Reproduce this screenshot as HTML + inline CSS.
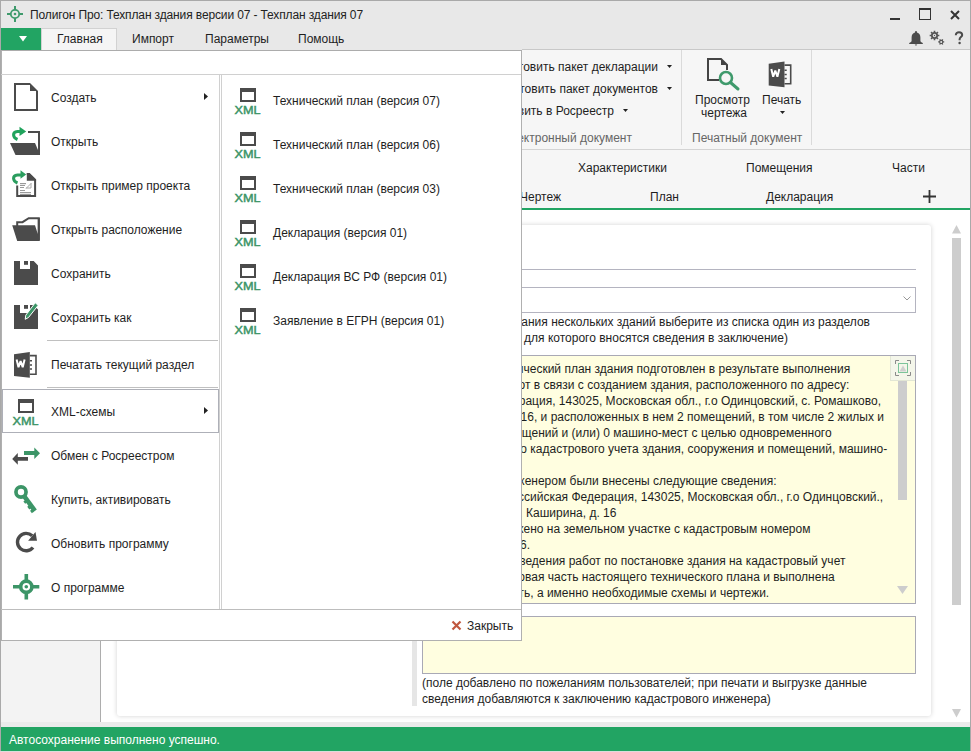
<!DOCTYPE html>
<html><head><meta charset="utf-8">
<style>
*{margin:0;padding:0;box-sizing:border-box}
html,body{width:971px;height:752px;overflow:hidden;background:#fff}
body{position:relative;font-family:"Liberation Sans",sans-serif;font-size:12px;color:#1e1e1e}
.a{position:absolute}
.t{position:absolute;white-space:nowrap;line-height:14px;font-size:12px}
svg{position:absolute;overflow:visible}
</style></head><body>

<!-- window chrome -->
<div class="a" style="left:0;top:0;width:971px;height:50px;background:#e8e8e8"></div>
<div class="a" style="left:0;top:0;width:971px;height:1px;background:#a9a9a9"></div>
<div class="a" style="left:0;top:0;width:1px;height:752px;background:#a9a9a9"></div>
<div class="a" style="left:970px;top:0;width:1px;height:752px;background:#a9a9a9"></div>
<!-- title icon -->
<svg style="left:7px;top:6px" width="16" height="16" viewBox="0 0 16 16">
 <g fill="#3f9a6c"><rect x="7" y="0" width="2" height="4"/><rect x="7" y="12" width="2" height="4"/><rect x="0" y="7" width="4" height="2"/><rect x="12" y="7" width="4" height="2"/></g>
 <circle cx="8" cy="8" r="4.2" fill="none" stroke="#3f9a6c" stroke-width="1.8"/><circle cx="8" cy="8" r="1.3" fill="#3f9a6c"/>
</svg>
<div class="t" style="left:30px;top:8px;color:#222;letter-spacing:-0.13px">Полигон Про: Техплан здания версии 07 - Техплан здания 07</div>
<!-- window buttons -->
<div class="a" style="left:890px;top:18px;width:10px;height:2px;background:#333"></div>
<div class="a" style="left:919px;top:8px;width:12px;height:12px;border:1.5px solid #333;border-top-width:2px"></div>
<svg style="left:950px;top:10px" width="10" height="10" viewBox="0 0 10 10"><path d="M1 1L9 9M9 1L1 9" stroke="#333" stroke-width="2"/></svg>
<!-- bell gear help -->
<svg style="left:908px;top:30px" width="16" height="16" viewBox="0 0 16 16"><path d="M8 1a1 1 0 0 1 1 1v.4c2.3.6 3.4 2.6 3.4 5.1v3.2c0 .9 1 1.6 2.4 2.3V14H1.2v-1c1.4-.7 2.4-1.4 2.4-2.3V7.5C3.6 5 4.7 3 7 2.4V2a1 1 0 0 1 1-1z" fill="#4b4b4b"/><path d="M6.8 14.6h2.4a1.2 1 0 0 1-2.4 0z" fill="#4b4b4b"/></svg>
<svg style="left:0;top:0" width="971" height="60" viewBox="0 0 971 60"><polygon points="939.32,34.64 939.32,36.36 938.02,36.27 937.53,37.44 938.52,38.30 937.30,39.52 936.44,38.53 935.27,39.02 935.36,40.32 933.64,40.32 933.73,39.02 932.56,38.53 931.70,39.52 930.48,38.30 931.47,37.44 930.98,36.27 929.68,36.36 929.68,34.64 930.98,34.73 931.47,33.56 930.48,32.70 931.70,31.48 932.56,32.47 933.73,31.98 933.64,30.68 935.36,30.68 935.27,31.98 936.44,32.47 937.30,31.48 938.52,32.70 937.53,33.56 938.02,34.73" fill="#555"/><circle cx="934.5" cy="35.5" r="1.7" fill="#e8e8e8"/><polygon points="944.21,41.18 944.21,42.62 943.31,42.52 942.80,43.41 943.33,44.15 942.08,44.87 941.71,44.04 940.69,44.04 940.32,44.87 939.07,44.15 939.60,43.41 939.09,42.52 938.19,42.62 938.19,41.18 939.09,41.28 939.60,40.39 939.07,39.65 940.32,38.93 940.69,39.76 941.71,39.76 942.08,38.93 943.33,39.65 942.80,40.39 943.31,41.28" fill="#555"/><circle cx="941.2" cy="41.9" r="1.0" fill="#e8e8e8"/><circle cx="934.5" cy="35.5" r="0.7" fill="#555"/></svg>
<svg style="left:954px;top:31px" width="10" height="14" viewBox="0 0 10 14"><path d="M1.8 4.2C1.8 2.3 3.2 1.2 5 1.2S8.2 2.3 8.2 4C8.2 5.9 5.6 6.3 5.6 8.2V9.3" fill="none" stroke="#4b4b4b" stroke-width="2"/><circle cx="5.6" cy="12" r="1.2" fill="#4b4b4b"/></svg>

<!-- tab row -->
<div class="a" style="left:1px;top:28px;width:40px;height:22px;background:#22a463"></div>
<svg style="left:19px;top:35.5px" width="8" height="6" viewBox="0 0 8 6"><path d="M0 0H8L4 5.6z" fill="#fff"/></svg>
<div class="a" style="left:41px;top:28px;width:76px;height:22px;background:#f5f5f5;border:1px solid #d2d2d2;border-bottom:none"></div>
<div class="t" style="left:57px;top:32px">Главная</div>
<div class="t" style="left:132px;top:32px">Импорт</div>
<div class="t" style="left:205px;top:32px">Параметры</div>
<div class="t" style="left:298px;top:32px">Помощь</div>
<div class="a" style="left:522px;top:49px;width:448px;height:1px;background:#c8c8c8"></div><div class="a" style="left:1px;top:50px;width:521px;height:1px;background:#acacac"></div>

<!-- ribbon -->
<div class="a" style="left:522px;top:50px;width:448px;height:100px;background:#f6f6f6"></div>
<div class="a" style="left:1px;top:149px;width:969px;height:1px;background:#d4d4d4"></div>
<div class="t" style="right:313px;top:60px">Подготовить пакет декларации</div>
<div class="t" style="right:313px;top:82px">Подготовить пакет документов</div>
<div class="t" style="right:357px;top:104px">Отправить в Росреестр</div>
<div class="t" style="right:339px;top:131px;color:#666">Электронный документ</div>
<svg style="left:667px;top:65px" width="5" height="3" viewBox="0 0 5 3"><path d="M0 0H5L2.5 3z" fill="#222"/></svg>
<svg style="left:667px;top:87px" width="5" height="3" viewBox="0 0 5 3"><path d="M0 0H5L2.5 3z" fill="#222"/></svg>
<svg style="left:623px;top:109px" width="5" height="3" viewBox="0 0 5 3"><path d="M0 0H5L2.5 3z" fill="#222"/></svg>
<div class="a" style="left:681px;top:50px;width:1px;height:95px;background:#dadada"></div>
<div class="a" style="left:811px;top:50px;width:1px;height:95px;background:#dadada"></div>
<!-- search doc icon -->
<svg style="left:707px;top:58px" width="33" height="32" viewBox="0 0 33 32">
 <path d="M12 22H1V1h13l6 6v5" fill="none" stroke="#444" stroke-width="2"/><path d="M14 1v6h6" fill="#444"/>
 <circle cx="19" cy="20" r="6" fill="none" stroke="#3f9a6c" stroke-width="2.6"/><path d="M23.5 24.5L31 31" stroke="#3f9a6c" stroke-width="3" stroke-linecap="round"/>
</svg>
<div class="t" style="left:695px;top:93px">Просмотр</div>
<div class="t" style="left:701px;top:106px">чертежа</div>
<!-- word icon -->
<svg style="left:0;top:0" width="971" height="160" viewBox="0 0 971 160"><g transform="translate(754.7,-290.5)">
<path d="M14 354.2L29.8 352V377.8L14 375.9Z" fill="#4b4b4b"/>
<path d="M29.8 355.6H36V374.2H29.8" fill="none" stroke="#4b4b4b" stroke-width="1.6"/>
<path d="M29.8 360h2.2v1.6h-2.2zM29.8 364.2h2.2v1.6h-2.2zM29.8 368.2h2.2v1.6h-2.2z" fill="#4b4b4b"/>
<path d="M16.6 359.4L18.5 367.2L20.6 361.2L22.7 367.2L24.6 359.4" fill="none" stroke="#fff" stroke-width="2" stroke-linejoin="bevel"/>
</g></svg>
<div class="t" style="left:762px;top:93px">Печать</div>
<svg style="left:780px;top:111px" width="5" height="3" viewBox="0 0 5 3"><path d="M0 0H5L2.5 3z" fill="#222"/></svg>
<div class="t" style="left:692px;top:131px;color:#666">Печатный документ</div>

<!-- tabs area -->
<div class="a" style="left:1px;top:150px;width:969px;height:59px;background:#f6f6f6"></div>
<div class="t" style="left:578px;top:161px">Характеристики</div>
<div class="t" style="left:746px;top:161px">Помещения</div>
<div class="t" style="left:892px;top:161px">Части</div>
<div class="t" style="right:410px;top:190px">Чертеж</div>
<div class="t" style="left:650px;top:190px">План</div>
<div class="t" style="left:766px;top:190px">Декларация</div>
<svg style="left:923px;top:190px" width="13" height="13" viewBox="0 0 13 13"><path d="M6.5 0V13M0 6.5H13" stroke="#333" stroke-width="1.8"/></svg>
<div class="a" style="left:101px;top:208px;width:869px;height:2px;background:#22a463"></div>

<!-- left panel -->
<div class="a" style="left:1px;top:150px;width:100px;height:572px;background:#f3f3f3;border-right:1px solid #adadad"></div>
<!-- bottom band -->
<div class="a" style="left:1px;top:722px;width:969px;height:5px;background:#ebebeb"></div>

<!-- card -->
<div class="a" style="left:117px;top:225px;width:814px;height:491px;background:#fff;border-radius:3px;box-shadow:0 0 5px rgba(0,0,0,.18)"></div>
<div class="a" style="left:430px;top:269px;width:486px;height:1px;background:#b4b4c0"></div>
<div class="a" style="left:430px;top:287px;width:486px;height:26px;border:1px solid #b4b4c0;background:#fff"></div>
<svg style="left:903px;top:296px" width="8" height="5" viewBox="0 0 8 5"><path d="M.5 .5L4 4L7.5 .5" fill="none" stroke="#999" stroke-width="1"/></svg>
<div class="t" style="right:101px;top:315px">(в случае создания нескольких зданий выберите из списка один из разделов</div>
<div class="t" style="right:183px;top:331px">«Характеристики здания», для которого вносятся сведения в заключение)</div>

<!-- yellow box 1 -->
<div class="a" style="left:422px;top:355px;width:494px;height:249px;background:#fffee0;border:1px solid #a9a9b5"></div>

<div class="a" style="left:423px;top:356px;width:492px;height:247px;overflow:hidden">
<div class="t" style="right:64.8px;top:6px">Технический план здания подготовлен в результате выполнения</div>
<div class="t" style="right:65.7px;top:22px">кадастровых работ в связи с созданием здания, расположенного по адресу:</div>
<div class="t" style="right:34.0px;top:38px">Российская Федерация, 143025, Московская обл., г.о Одинцовский, с. Ромашково,</div>
<div class="t" style="right:31.0px;top:54px">ул. Каширина, д. 16, и расположенных в нем 2 помещений, в том числе 2 жилых и</div>
<div class="t" style="right:83.4px;top:70px">0 нежилых помещений и (или) 0 машино-мест с целью одновременного</div>
<div class="t" style="right:27.8px;top:86px">государственного кадастрового учета здания, сооружения и помещений, машино-</div>
<div class="t" style="right:138.5px;top:118px">Кадастровым инженером были внесены следующие сведения:</div>
<div class="t" style="right:31.8px;top:134px">Адрес: Российская Федерация, 143025, Московская обл., г.о Одинцовский.,</div>
<div class="t" style="right:298.6px;top:150px">с. Ромашково, ул. Каширина, д. 16</div>
<div class="t" style="right:104.6px;top:166px">Здание расположено на земельном участке с кадастровым номером</div>
<div class="t" style="right:385.0px;top:182px">50:20:0000000:16.</div>
<div class="t" style="right:69.6px;top:198px">В ходе проведения работ по постановке здания на кадастровый учет</div>
<div class="t" style="right:80.3px;top:214px">была подготовлена текстовая часть настоящего технического плана и выполнена</div>
<div class="t" style="right:145.8px;top:230px">графическая часть, а именно необходимые схемы и чертежи.</div>
</div>
<div class="a" style="left:890px;top:356px;width:25px;height:25px;background:#f4f6ea;border-left:1px solid #e2e6d4;border-bottom:1px solid #e2e6d4"></div>
<svg style="left:895px;top:360px" width="16" height="16" viewBox="0 0 16 16"><path d="M.5 4V.5H4M12 .5h3.5V4M15.5 12v3.5H12M4 15.5H.5V12" fill="none" stroke="#8a8a8a" stroke-width="1"/><rect x="3.5" y="3.5" width="9" height="9" fill="none" stroke="#7cc49a" stroke-width="1"/><path d="M4.5 11.5L8 5.5L11.5 11.5z" fill="#cfcfcf"/></svg>
<div class="a" style="left:898px;top:381px;width:9px;height:119px;background:#cdcdcd"></div>
<svg style="left:897px;top:586px" width="11" height="8" viewBox="0 0 11 8"><path d="M0 0H11L5.5 8z" fill="#cdcdcd"/></svg>
<!-- yellow box 2 -->
<div class="a" style="left:422px;top:616px;width:494px;height:58px;background:#fffee0;border:1px solid #a9a9b5"></div>
<div class="t" style="left:422px;top:676px">(поле добавлено по пожеланиям пользователей; при печати и выгрузке данные</div>
<div class="t" style="left:422px;top:692px">сведения добавляются к заключению кадастрового инженера)</div>
<div class="a" style="left:412px;top:226px;width:5px;height:480px;background:#e6e6e6"></div>

<!-- outer scrollbar -->
<svg style="left:952px;top:225px" width="9" height="8.5" viewBox="0 0 9 8.5"><path d="M0 8.5H9L4.5 0z" fill="#cdcdcd"/></svg>
<div class="a" style="left:952px;top:238px;width:9px;height:367px;background:#cdcdcd"></div>
<svg style="left:952px;top:709px" width="9" height="8.5" viewBox="0 0 9 8.5"><path d="M0 0H9L4.5 8.5z" fill="#cdcdcd"/></svg>

<!-- status bar -->
<div class="a" style="left:1px;top:727px;width:969px;height:24px;background:#22a463"></div>
<div class="a" style="left:0;top:751px;width:971px;height:1px;background:#dcdcdc"></div>
<div class="t" style="left:9px;top:733px;color:#fff">Автосохранение выполнено успешно.</div>

<!-- MENU OVERLAY -->
<div class="a" style="left:1px;top:51px;width:521px;height:590px;background:#fff;border:1px solid #b0b0b0;border-top:none"></div>
<div class="a" style="left:1px;top:74px;width:520px;height:1px;background:#d0d0d0"></div>
<div class="a" style="left:219px;top:75px;width:1px;height:534px;background:#d0d0d0"></div>
<div class="a" style="left:221px;top:75px;width:1px;height:534px;background:#d0d0d0"></div>
<div class="a" style="left:1px;top:609px;width:520px;height:1px;background:#bdbdbd"></div>

<!-- menu items -->
<div class="t" style="left:51px;top:91px">Создать</div>
<svg style="left:204px;top:93px" width="4" height="7" viewBox="0 0 4 7"><path d="M0 0L4 3.5L0 7z" fill="#222"/></svg>
<div class="t" style="left:51px;top:135px">Открыть</div>
<div class="t" style="left:51px;top:179px">Открыть пример проекта</div>
<div class="t" style="left:51px;top:223px">Открыть расположение</div>
<div class="t" style="left:51px;top:267px">Сохранить</div>
<div class="t" style="left:51px;top:311px">Сохранить как</div>
<div class="a" style="left:47px;top:340px;width:171px;height:1px;background:#c0c0c0"></div>
<div class="t" style="left:51px;top:358px">Печатать текущий раздел</div>
<div class="a" style="left:47px;top:387px;width:171px;height:1px;background:#c0c0c0"></div>
<div class="a" style="left:2px;top:389px;width:217px;height:44px;border:1px solid #aeb0b8;background:#fff"></div>
<div class="t" style="left:51px;top:405px">XML-схемы</div>
<svg style="left:204px;top:407px" width="4" height="7" viewBox="0 0 4 7"><path d="M0 0L4 3.5L0 7z" fill="#222"/></svg>
<div class="t" style="left:51px;top:449px">Обмен с Росреестром</div>
<div class="t" style="left:51px;top:493px">Купить, активировать</div>
<div class="t" style="left:51px;top:537px">Обновить программу</div>
<div class="t" style="left:51px;top:581px">О программе</div>

<div class="t" style="left:273px;top:94px">Технический план (версия 07)</div>
<div class="t" style="left:273px;top:138px">Технический план (версия 06)</div>
<div class="t" style="left:273px;top:182px">Технический план (версия 03)</div>
<div class="t" style="left:273px;top:226px">Декларация (версия 01)</div>
<div class="t" style="left:273px;top:270px">Декларация ВС РФ (версия 01)</div>
<div class="t" style="left:273px;top:314px">Заявление в ЕГРН (версия 01)</div>

<svg style="left:451px;top:620px" width="11" height="11" viewBox="0 0 11 11"><path d="M1.5 1.5L9.5 9.5M9.5 1.5L1.5 9.5" stroke="#c0573e" stroke-width="2.2"/></svg>
<div class="t" style="left:467px;top:619px">Закрыть</div>
<svg style="left:0;top:0;pointer-events:none" width="971" height="752" viewBox="0 0 971 752">
<!-- create -->
<path d="M14 83H30L38 91V111H14Z M16 85V109H36V91H30V85Z" fill="#4b4b4b" fill-rule="evenodd"/>
<!-- open -->
<path d="M28 131H40V155H38V133H28Z" fill="#4b4b4b"/>
<path d="M10 143H35L38 150V155H15.5Z" fill="#4b4b4b"/>
<path d="M17.5 139.5C12.5 137.5 12 132 17.5 131.5H21.5" fill="none" stroke="#20a35c" stroke-width="3"/>
<path d="M19.5 126.8L26.2 131.4L19.5 136Z" fill="#20a35c"/>
<!-- open sample -->
<path d="M16.2 185.5V197H36.1V179.5L29.5 173H26.8V175H28.7L34.1 180.3V195H18.2V185.5Z" fill="#4b4b4b"/>
<path d="M26.8 173H29.5L36.1 179.5V180.7H26.8Z" fill="#4b4b4b"/>
<g fill="#9a9a9a"><rect x="20" y="183" width="6" height="1.2"/><rect x="20" y="185" width="5" height="1"/><rect x="20" y="187" width="4" height="1"/><rect x="20" y="190" width="5" height="1"/><rect x="20" y="192" width="11" height="1.2"/><rect x="20" y="194" width="11" height="1"/></g>
<path d="M26 188.5L31 183.5M26 188h5v-5" fill="none" stroke="#aaa" stroke-width="1"/>
<path d="M17.5 183C12.5 181 12 175.5 17.5 175H21" fill="none" stroke="#2a9d5e" stroke-width="3"/>
<path d="M20.5 170.2L26.2 174.5L20.5 178.8Z" fill="#2a9d5e"/>
<!-- folder location -->
<path d="M17.2 227V222.2H22.5L28.7 218.2H38.8V240" fill="none" stroke="#4b4b4b" stroke-width="2"/>
<path d="M12.2 225.2H35L37.8 234V218H39.8V241H17.2Z" fill="#4b4b4b"/>
<!-- save -->
<path d="M14 261H20V269H30V261H33.7L38 265.5V285H14Z" fill="#4b4b4b"/>
<rect x="24" y="261" width="4" height="3.8" fill="#4b4b4b"/>
<!-- save as -->
<path d="M14 305H20V313H30V305H33.7L38 309.5V329H14Z" fill="#4b4b4b"/>
<rect x="24" y="305" width="4" height="3.8" fill="#4b4b4b"/>
<path d="M35.2 302.8L38.2 305.3L28.5 317.5L25.2 319.3L25.8 315.2Z" fill="#3c9567" stroke="#fff" stroke-width="1"/>
<!-- word -->
<path d="M14 354.2L29.8 352V377.8L14 375.9Z" fill="#4b4b4b"/>
<path d="M29.8 355.6H36V374.2H29.8" fill="none" stroke="#4b4b4b" stroke-width="1.6"/>
<path d="M29.8 360h2.2v1.6h-2.2zM29.8 364.2h2.2v1.6h-2.2zM29.8 368.2h2.2v1.6h-2.2z" fill="#4b4b4b"/>
<path d="M16.6 359.4L18.5 367.2L20.6 361.2L22.7 367.2L24.6 359.4" fill="none" stroke="#fff" stroke-width="2" stroke-linejoin="bevel"/>
<!-- xml -->
<path d="M18 399h16v14h-16z M20 403v8h12v-8z" fill="#4b4b4b" fill-rule="evenodd"/>
<text x="12.5" y="425" font-family="Liberation Sans" font-weight="normal" font-size="11.2" fill="#3c9567" stroke="#3c9567" stroke-width="0.45" textLength="26" lengthAdjust="spacingAndGlyphs">XML</text>
<!-- exchange -->
<path d="M24 451H34.3V447.4L40 453.2L34.3 459V455H24Z" fill="#3c9567"/>
<path d="M28 457H17.8V453L12.2 458.9L17.8 464.7V460.8H28Z" fill="#4b4b4b"/>
<!-- key -->
<circle cx="21" cy="492" r="5.05" fill="none" stroke="#3c9567" stroke-width="3.7"/>
<g transform="translate(21,492) rotate(53.5)">
<rect x="4" y="-2.3" width="19.5" height="4.6" fill="#3c9567"/>
<rect x="9" y="1.5" width="3" height="2.2" fill="#3c9567"/>
<rect x="15.5" y="1.5" width="3.5" height="2.2" fill="#3c9567"/>
<rect x="20.5" y="1.5" width="3" height="2.4" fill="#3c9567"/>
</g>
<!-- refresh -->
<path d="M32.2 535.8A8.7 8.7 0 1 0 33 547.5" fill="none" stroke="#4b4b4b" stroke-width="3.4"/>
<path d="M35.5 532L37 540.8H28.1Z" fill="#4b4b4b"/>
<!-- about -->
<rect x="13" y="585" width="26.3" height="3.5" fill="#3c9567"/>
<rect x="24.5" y="574" width="3.6" height="25.5" fill="#3c9567"/>
<circle cx="26.3" cy="586.7" r="5.6" fill="#fff" stroke="#3c9567" stroke-width="3.6"/>
<circle cx="26.3" cy="586.7" r="1.8" fill="#3c9567"/>
<path d="M240 88h16v14h-16z M242 92v8h12v-8z" fill="#4b4b4b" fill-rule="evenodd"/>
<text x="234.5" y="113.7" font-family="Liberation Sans" font-weight="normal" font-size="11.2" fill="#3c9567" stroke="#3c9567" stroke-width="0.45" textLength="26" lengthAdjust="spacingAndGlyphs">XML</text>
<path d="M240 132h16v14h-16z M242 136v8h12v-8z" fill="#4b4b4b" fill-rule="evenodd"/>
<text x="234.5" y="157.7" font-family="Liberation Sans" font-weight="normal" font-size="11.2" fill="#3c9567" stroke="#3c9567" stroke-width="0.45" textLength="26" lengthAdjust="spacingAndGlyphs">XML</text>
<path d="M240 176h16v14h-16z M242 180v8h12v-8z" fill="#4b4b4b" fill-rule="evenodd"/>
<text x="234.5" y="201.7" font-family="Liberation Sans" font-weight="normal" font-size="11.2" fill="#3c9567" stroke="#3c9567" stroke-width="0.45" textLength="26" lengthAdjust="spacingAndGlyphs">XML</text>
<path d="M240 220h16v14h-16z M242 224v8h12v-8z" fill="#4b4b4b" fill-rule="evenodd"/>
<text x="234.5" y="245.7" font-family="Liberation Sans" font-weight="normal" font-size="11.2" fill="#3c9567" stroke="#3c9567" stroke-width="0.45" textLength="26" lengthAdjust="spacingAndGlyphs">XML</text>
<path d="M240 264h16v14h-16z M242 268v8h12v-8z" fill="#4b4b4b" fill-rule="evenodd"/>
<text x="234.5" y="289.7" font-family="Liberation Sans" font-weight="normal" font-size="11.2" fill="#3c9567" stroke="#3c9567" stroke-width="0.45" textLength="26" lengthAdjust="spacingAndGlyphs">XML</text>
<path d="M240 308h16v14h-16z M242 312v8h12v-8z" fill="#4b4b4b" fill-rule="evenodd"/>
<text x="234.5" y="333.7" font-family="Liberation Sans" font-weight="normal" font-size="11.2" fill="#3c9567" stroke="#3c9567" stroke-width="0.45" textLength="26" lengthAdjust="spacingAndGlyphs">XML</text>

</svg>
</body></html>
